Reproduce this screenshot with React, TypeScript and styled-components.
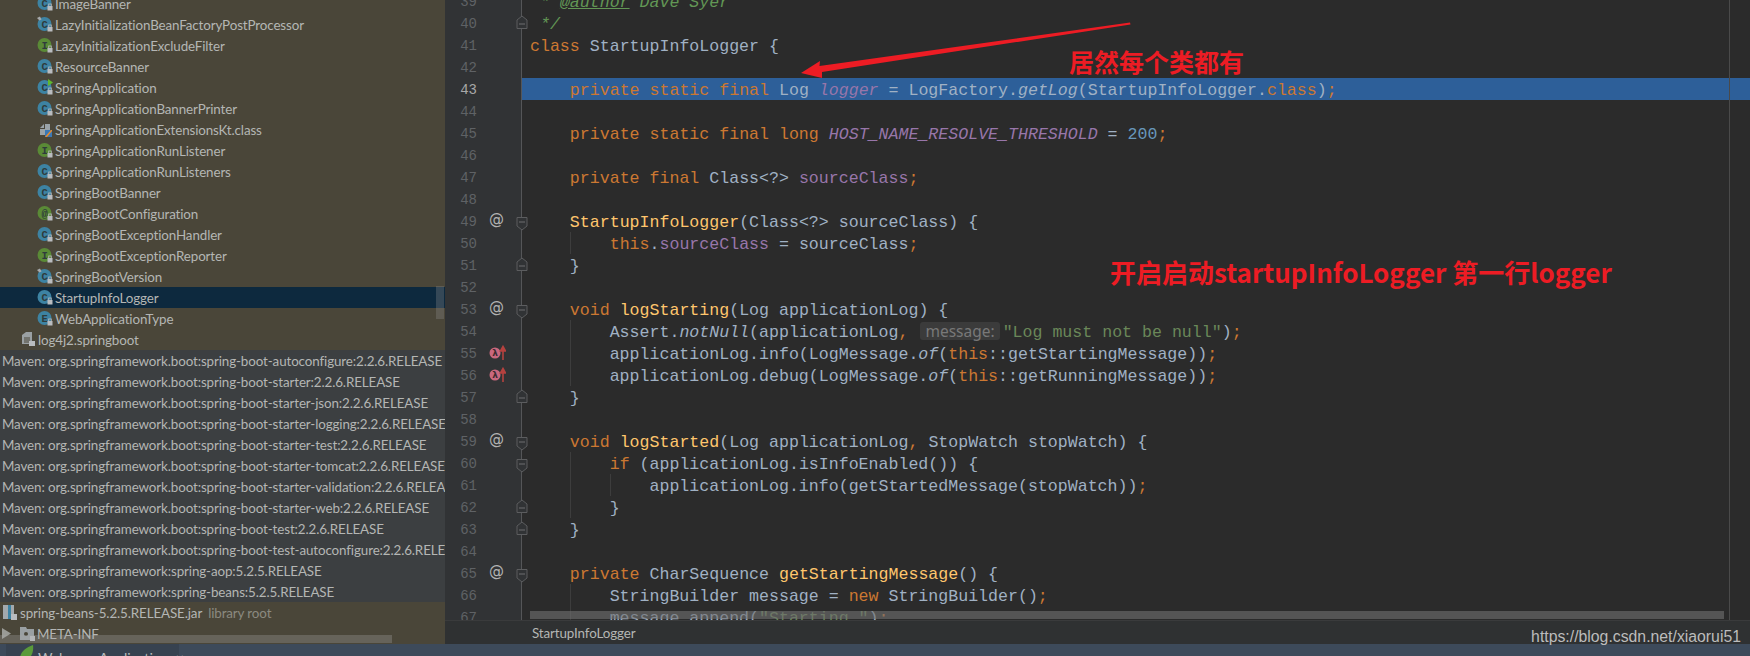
import React from "react";
import styled, { createGlobalStyle } from "styled-components";

const CH = 9.96;
const UI = `Lato, "Noto Sans", sans-serif`;
const MONO = `"Liberation Mono", monospace`;

const Global = createGlobalStyle`
  html, body { margin: 0; padding: 0; background: #2b2b2b; overflow: hidden; }
`;

const Frame = styled.div`
  position: relative;
  width: 1750px;
  height: 656px;
  overflow: hidden;
  display: flex;
  flex-direction: column;
`;
const Main = styled.div`
  display: flex;
  height: 644px;
  flex: none;
`;
const Sidebar = styled.div`
  position: relative;
  width: 445px;
  flex: none;
  height: 644px;
  overflow: hidden;
  background: #4a4639;
  font: 13.4px/21px ${UI};
  letter-spacing: -0.12px;
  color: #b4b6b4;
`;
const TreeList = styled.div`
  margin-top: -7px;
`;
const Row = styled.div<{ $bg?: string; $pad: number }>`
  display: flex;
  align-items: center;
  height: 21px;
  padding-left: ${(p) => p.$pad}px;
  background: ${(p) => p.$bg || "transparent"};
  white-space: nowrap;
  overflow: hidden;
`;
const RowText = styled.span`
  flex: none;
  padding-top: 2px;
`;
const Muted = styled.span`
  color: #8b8a80;
  margin-left: 6px;
  padding-top: 2px;
`;
const IconBox = styled.svg`
  flex: none;
  width: 17px;
  height: 17px;
  margin-right: 1px;
`;
const ExpandIcon = styled.svg`
  flex: none;
  width: 10px;
  height: 13px;
  margin-right: 7px;
`;
const VScroll = styled.div`
  position: absolute;
  left: 436px;
  top: 286px;
  width: 8px;
  height: 33px;
  background: rgba(140, 140, 140, 0.32);
`;
const HScroll = styled.div`
  position: absolute;
  left: 0;
  top: 635px;
  width: 392px;
  height: 8px;
  background: rgba(170, 170, 170, 0.3);
`;

const Editor = styled.div`
  position: relative;
  flex: 1;
  min-width: 0;
  height: 644px;
  display: flex;
  flex-direction: column;
  background: #2b2b2b;
  overflow: hidden;
`;
const CodeArea = styled.div`
  height: 620px;
  flex: none;
  overflow: hidden;
`;
const CodeScroll = styled.div`
  margin-top: -10px;
`;
const LineRow = styled.div`
  display: flex;
  height: 22px;
`;
const Gutter = styled.div`
  position: relative;
  flex: none;
  width: 77px;
  box-sizing: border-box;
  background: #313335;
  border-right: 1px solid #555658;
`;
const LineNo = styled.div<{ $active: boolean }>`
  width: 32px;
  text-align: right;
  font: 14px/25px ${MONO};
  color: ${(p) => (p.$active ? "#a8a8a8" : "#5f6265")};
`;
const AtMark = styled.span`
  position: absolute;
  left: 44px;
  top: -2px;
  font: 15px/22px "DejaVu Sans", sans-serif;
  color: #b3b3b3;
`;
const LambdaIcon = styled.svg`
  position: absolute;
  left: 44px;
  top: 3px;
  width: 17px;
  height: 16px;
`;
const FoldIcon = styled.svg<{ $top: number }>`
  position: absolute;
  left: 71px;
  top: ${(p) => p.$top}px;
  width: 12px;
  height: 14px;
  z-index: 2;
`;
const Code = styled.div<{ $hl: boolean }>`
  position: relative;
  flex: 1;
  padding-left: 8px;
  font: 16.6px/26px ${MONO};
  white-space: pre;
  color: #a0b1c4;
  background: ${(p) => (p.$hl ? "#2d5f99" : "transparent")};
`;
const Guide = styled.span<{ $left: number }>`
  position: absolute;
  top: 0;
  bottom: 0;
  left: ${(p) => p.$left}px;
  width: 1px;
  background: #3d3d3d;
`;
const K = styled.span`color: #cc7832;`;
const F = styled.span`color: #9876aa; font-style: italic;`;
const Fi = styled.span`color: #9876aa;`;
const M = styled.span`color: #ffc66d;`;
const I = styled.i`font-style: italic;`;
const S = styled.span`color: #6a8759;`;
const N = styled.span`color: #6897bb;`;
const Doc = styled.span`color: #629755; font-style: italic;`;
const DocTag = styled.span`color: #629755; font-style: italic; text-decoration: underline;`;
const Hint = styled.span`
  display: inline-block;
  font: 15.5px/18px "Noto Sans", sans-serif;
  color: #787878;
  background: #3b3b3b;
  border-radius: 3px;
  padding: 0 5px;
  margin-left: 2px;
  margin-right: 3px;
`;
const RightMargin = styled.div`
  position: absolute;
  left: 1284px;
  top: 0;
  height: 620px;
  width: 1px;
  background: #4a4a4a;
`;
const EditorHScroll = styled.div`
  position: absolute;
  left: 85px;
  top: 611px;
  width: 1194px;
  height: 8px;
  background: rgba(112, 112, 112, 0.62);
`;
const Breadcrumb = styled.div`
  flex: 1;
  box-sizing: border-box;
  border-top: 1px solid #3a3b3c;
  padding-left: 87px;
  background: #2f3132;
  font: 13.4px/25px ${UI};
  letter-spacing: -0.12px;
  color: #b4b6b4;
`;
const ToolStrip = styled.div`
  flex: none;
  height: 12px;
  background: #3d4a5a;
  padding-left: 6px;
  overflow: hidden;
`;
const ToolTab = styled.div`
  display: flex;
  width: 173px;
  height: 12px;
  padding-left: 13px;
  box-sizing: border-box;
  background: #374250;
  font: 14px/28px ${UI};
  white-space: pre;
  color: #b9bcbd;
`;
const LeafIcon = styled.svg`
  flex: none;
  width: 15px;
  height: 14px;
  margin-right: 4px;
  margin-top: 1px;
`;
const Note = styled.div<{ $x: number; $y: number; $size: number }>`
  position: absolute;
  left: ${(p) => p.$x}px;
  top: ${(p) => p.$y}px;
  font: 700 ${(p) => p.$size}px/34px "Noto Sans CJK SC", "Noto Sans", sans-serif;
  color: #ed1c24;
  white-space: nowrap;
`;
const Arrow = styled.svg`
  position: absolute;
  left: 790px;
  top: 15px;
  width: 350px;
  height: 70px;
`;
const Watermark = styled.div`
  position: absolute;
  right: 9px;
  top: 627px;
  font: 15.8px/20px "Liberation Sans", sans-serif;
  color: #bcbcbc;
`;

type Kind = "c" | "i" | "a" | "e" | "cs" | "cr" | "k";

const TreeIcon = ({ kind }: { kind: Kind }) => {
  if (kind === "k") {
    return (
      <IconBox viewBox="0 0 17 17">
        <path d="M3 7l4-4h0v4zM3 8h5V3h5v11H3z" fill="#9aa3a8" />
        <rect x="8" y="9" width="7" height="7" fill="#3a78b5" />
        <path d="M8 16l6-7h1v1l-5 6z" fill="#f08a24" />
      </IconBox>
    );
  }
  const fill = kind === "i" || kind === "a" ? "#5a8a36" : "#3d83a3";
  const letter = kind === "i" ? "I" : kind === "a" ? "@" : kind === "e" ? "E" : "C";
  return (
    <IconBox viewBox="0 0 17 17">
      <circle cx="7.5" cy="8" r="7" fill={fill} />
      <text x="7.5" y="12" textAnchor="middle" fontSize="10.5" fontWeight="700" fontFamily="Liberation Mono, monospace" fill="#2e3b3c">
        {letter}
      </text>
      <rect x="10.5" y="11" width="5" height="4.5" fill="#b9bcbf" />
      <rect x="11.7" y="9" width="2.6" height="3" fill="none" stroke="#b9bcbf" strokeWidth="0.8" />
      {kind === "cs" && <path d="M0 2l3-1.5 1.5 3-2 1z" fill="#a7aaad" />}
      {kind === "cr" && <path d="M11 0l5 3.5-5 3.5z" fill="#5fb82e" />}
    </IconBox>
  );
};

const treeItems: [string, Kind][] = [
  ["ImageBanner", "c"],
  ["LazyInitializationBeanFactoryPostProcessor", "cs"],
  ["LazyInitializationExcludeFilter", "i"],
  ["ResourceBanner", "c"],
  ["SpringApplication", "cr"],
  ["SpringApplicationBannerPrinter", "c"],
  ["SpringApplicationExtensionsKt.class", "k"],
  ["SpringApplicationRunListener", "i"],
  ["SpringApplicationRunListeners", "c"],
  ["SpringBootBanner", "c"],
  ["SpringBootConfiguration", "a"],
  ["SpringBootExceptionHandler", "c"],
  ["SpringBootExceptionReporter", "i"],
  ["SpringBootVersion", "cs"],
  ["StartupInfoLogger", "c"],
  ["WebApplicationType", "e"],
];

const mavenItems = [
  "org.springframework.boot:spring-boot-autoconfigure:2.2.6.RELEASE",
  "org.springframework.boot:spring-boot-starter:2.2.6.RELEASE",
  "org.springframework.boot:spring-boot-starter-json:2.2.6.RELEASE",
  "org.springframework.boot:spring-boot-starter-logging:2.2.6.RELEASE",
  "org.springframework.boot:spring-boot-starter-test:2.2.6.RELEASE",
  "org.springframework.boot:spring-boot-starter-tomcat:2.2.6.RELEASE",
  "org.springframework.boot:spring-boot-starter-validation:2.2.6.RELEASE",
  "org.springframework.boot:spring-boot-starter-web:2.2.6.RELEASE",
  "org.springframework.boot:spring-boot-test:2.2.6.RELEASE",
  "org.springframework.boot:spring-boot-test-autoconfigure:2.2.6.RELEASE",
  "org.springframework:spring-aop:5.2.5.RELEASE",
  "org.springframework:spring-beans:5.2.5.RELEASE",
];

type Line = {
  n: number;
  code?: React.ReactNode;
  at?: boolean;
  lambda?: boolean;
  fold?: "open" | "close";
  guides?: number[];
};

const lines: Line[] = [
  { n: 39, code: <Doc> * <DocTag>@author</DocTag> Dave Syer</Doc> },
  { n: 40, code: <Doc> */</Doc>, fold: "close" },
  { n: 41, code: <><K>class</K> StartupInfoLogger {"{"}</> },
  { n: 42 },
  { n: 43, code: <>    <K>private static final</K> Log <F>logger</F> = LogFactory.<I>getLog</I>(StartupInfoLogger.<K>class</K>)<K>;</K></> },
  { n: 44 },
  { n: 45, code: <>    <K>private static final long</K> <F>HOST_NAME_RESOLVE_THRESHOLD</F> = <N>200</N><K>;</K></> },
  { n: 46 },
  { n: 47, code: <>    <K>private final</K> Class&lt;?&gt; <Fi>sourceClass</Fi><K>;</K></> },
  { n: 48 },
  { n: 49, at: true, fold: "open", code: <>    <M>StartupInfoLogger</M>(Class&lt;?&gt; sourceClass) {"{"}</> },
  { n: 50, guides: [4], code: <>        <K>this</K>.<Fi>sourceClass</Fi> = sourceClass<K>;</K></> },
  { n: 51, fold: "close", code: <>    {"}"}</> },
  { n: 52 },
  { n: 53, at: true, fold: "open", code: <>    <K>void</K> <M>logStarting</M>(Log applicationLog) {"{"}</> },
  { n: 54, guides: [4], code: <>        Assert.<I>notNull</I>(applicationLog<K>,</K> <Hint>message:</Hint><S>"Log must not be null"</S>)<K>;</K></> },
  { n: 55, lambda: true, guides: [4], code: <>        applicationLog.info(LogMessage.<I>of</I>(<K>this</K>::getStartingMessage))<K>;</K></> },
  { n: 56, lambda: true, guides: [4], code: <>        applicationLog.debug(LogMessage.<I>of</I>(<K>this</K>::getRunningMessage))<K>;</K></> },
  { n: 57, fold: "close", code: <>    {"}"}</> },
  { n: 58 },
  { n: 59, at: true, fold: "open", code: <>    <K>void</K> <M>logStarted</M>(Log applicationLog<K>,</K> StopWatch stopWatch) {"{"}</> },
  { n: 60, fold: "open", guides: [4], code: <>        <K>if</K> (applicationLog.isInfoEnabled()) {"{"}</> },
  { n: 61, guides: [4, 8], code: <>            applicationLog.info(getStartedMessage(stopWatch))<K>;</K></> },
  { n: 62, fold: "close", guides: [4], code: <>        {"}"}</> },
  { n: 63, fold: "close", code: <>    {"}"}</> },
  { n: 64 },
  { n: 65, at: true, fold: "open", code: <>    <K>private</K> CharSequence <M>getStartingMessage</M>() {"{"}</> },
  { n: 66, guides: [4], code: <>        StringBuilder message = <K>new</K> StringBuilder()<K>;</K></> },
  { n: 67, guides: [4], code: <>        message.append(<S>"Starting "</S>)<K>;</K></> },
];

const Fold = ({ type }: { type: "open" | "close" }) => (
  <FoldIcon viewBox="0 0 12 14" $top={type === "open" ? 7 : 3}>
    {type === "open" ? (
      <path d="M1 .5h10v8.5l-5 4-5-4z" fill="#313335" stroke="#5c5d5f" />
    ) : (
      <path d="M1 13.5h10v-8.5l-5-4-5 4z" fill="#313335" stroke="#5c5d5f" />
    )}
    <path d={type === "open" ? "M3 5h6" : "M3 9h6"} stroke="#6e6f71" />
  </FoldIcon>
);

const Lambda = () => (
  <LambdaIcon viewBox="0 0 17 16">
    <circle cx="6" cy="8" r="5.5" fill="#c9687e" />
    <text x="6" y="11" textAnchor="middle" fontSize="9" fontWeight="700" fontFamily="DejaVu Sans, sans-serif" fill="#3c2a30">λ</text>
    <path d="M14 15V3M11.5 6L14 1.5 16.5 6z" stroke="#b5423f" strokeWidth="1.6" fill="#b5423f" />
  </LambdaIcon>
);

export default function App() {
  return (
    <Frame>
      <Global />
      <Main>
        <Sidebar>
          <TreeList>
            {treeItems.map(([name, kind]) => (
              <Row key={name} $pad={37} $bg={name === "StartupInfoLogger" ? "#0d293e" : undefined}>
                <TreeIcon kind={kind} />
                <RowText>{name}</RowText>
              </Row>
            ))}
            <Row $pad={20}>
              <IconBox viewBox="0 0 17 17">
                <path d="M2 4l4-3h6v12H2z" fill="#9aa0a3" />
                <path d="M4 7h6M4 9h6M4 11h6" stroke="#4a4639" />
                <rect x="9" y="10" width="6" height="5" fill="#b9bcbf" />
              </IconBox>
              <RowText>log4j2.springboot</RowText>
            </Row>
            {mavenItems.map((m) => (
              <Row key={m} $pad={2} $bg="#3c3f41">
                <RowText>Maven: {m}</RowText>
              </Row>
            ))}
            <Row $pad={2}>
              <IconBox viewBox="0 0 17 17">
                <path d="M1 1h11v14H1z" fill="#a3a9ad" />
                <path d="M6 1h3v14H6z" fill="#3d83a3" />
                <rect x="9" y="10" width="6" height="6" fill="#b9bcbf" />
              </IconBox>
              <RowText>spring-beans-5.2.5.RELEASE.jar</RowText>
              <Muted>library root</Muted>
            </Row>
            <Row $pad={2}>
              <ExpandIcon viewBox="0 0 10 13">
                <path d="M0 1l9 5.5-9 5.5z" fill="#9a9b96" />
              </ExpandIcon>
              <IconBox viewBox="0 0 17 17">
                <path d="M1 2h6l1 2h7v11H1z" fill="#9aa0a3" />
                <circle cx="7" cy="9" r="2" fill="#4a4639" />
                <rect x="11" y="11" width="5" height="5" fill="#b9bcbf" />
              </IconBox>
              <RowText>META-INF</RowText>
            </Row>
          </TreeList>
          <VScroll />
          <HScroll />
        </Sidebar>
        <Editor>
          <CodeArea>
            <CodeScroll>
              {lines.map((l) => (
                <LineRow key={l.n}>
                  <Gutter>
                    <LineNo $active={l.n === 43}>{l.n}</LineNo>
                    {l.at && <AtMark>@</AtMark>}
                    {l.lambda && <Lambda />}
                    {l.fold && <Fold type={l.fold} />}
                  </Gutter>
                  <Code $hl={l.n === 43}>
                    {l.guides?.map((g) => (
                      <Guide key={g} $left={8 + g * CH} />
                    ))}
                    {l.code}
                  </Code>
                </LineRow>
              ))}
            </CodeScroll>
          </CodeArea>
          <RightMargin />
          <EditorHScroll />
          <Breadcrumb>StartupInfoLogger</Breadcrumb>
        </Editor>
      </Main>
      <ToolStrip>
        <ToolTab>
          <LeafIcon viewBox="0 0 15 14">
            <path d="M1 14C1 7 6 3 14 0c1 7-2 14-7 14z" fill="#5a9a3a" />
          </LeafIcon>
          Welcome Application  ×
        </ToolTab>
      </ToolStrip>
      <Arrow viewBox="790 15 350 70">
        <path d="M801 73L820 61 819.5 66 1130 22.5 1130.5 24.5 822 72 822 78z" fill="#ed1c24" />
      </Arrow>
      <Note $x={1069} $y={44} $size={25}>居然每个类都有</Note>
      <Note $x={1110} $y={255} $size={26}>开启启动startupInfoLogger 第一行logger</Note>
      <Watermark>https://blog.csdn.net/xiaorui51</Watermark>
    </Frame>
  );
}
